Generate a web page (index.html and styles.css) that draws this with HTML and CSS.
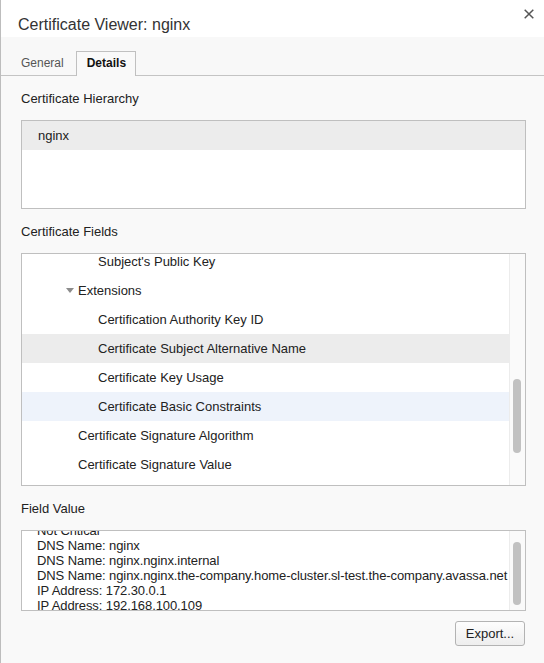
FILE: index.html
```html
<!DOCTYPE html>
<html>
<head>
<meta charset="utf-8">
<title>Certificate Viewer: nginx</title>
<link rel="stylesheet" href="styles.css">
</head>
<body>
<div class="dialog">
  <div class="titlebar">
    <span class="title">Certificate Viewer: nginx</span>
    <button class="close" aria-label="Close">
      <svg width="10" height="10" viewBox="0 0 10 10"><path d="M0.7 0.7 L9.3 9.3 M9.3 0.7 L0.7 9.3" stroke="#555" stroke-width="1.5" fill="none"/></svg>
    </button>
  </div>
  <div class="tabs">
    <div class="tab">General</div>
    <div class="tab active">Details</div>
  </div>
  <div class="content">
    <div class="label">Certificate Hierarchy</div>
    <div class="box hierarchy">
      <div class="hrow selected">nginx</div>
    </div>

    <div class="label">Certificate Fields</div>
    <div class="box fields">
      <div class="list">
        <div class="rows">
          <div class="row l3">Subject's Public Key</div>
          <div class="row l2x"><span class="tri"></span>Extensions</div>
          <div class="row l3">Certification Authority Key ID</div>
          <div class="row l3 selected">Certificate Subject Alternative Name</div>
          <div class="row l3">Certificate Key Usage</div>
          <div class="row l3 hover">Certificate Basic Constraints</div>
          <div class="row l2">Certificate Signature Algorithm</div>
          <div class="row l2">Certificate Signature Value</div>
        </div>
      </div>
      <div class="scrollbar"><div class="thumb thumb-fields"></div></div>
    </div>

    <div class="label">Field Value</div>
    <div class="box value">
      <div class="valtext">
        <div class="lines">
          <div>Not Critical</div>
          <div>DNS Name: nginx</div>
          <div>DNS Name: nginx.nginx.internal</div>
          <div>DNS Name: nginx.nginx.the-company.home-cluster.sl-test.the-company.avassa.net</div>
          <div>IP Address: 172.30.0.1</div>
          <div>IP Address: 192.168.100.109</div>
        </div>
      </div>
      <div class="scrollbar"><div class="thumb thumb-value"></div></div>
    </div>

    <div class="actions">
      <button class="btn">Export...</button>
    </div>
  </div>
</div>
</body>
</html>
```

FILE: styles.css
```css
* { box-sizing: border-box; }

html, body {
  margin: 0;
  padding: 0;
  background: #f9f9f9;
}

body {
  font-family: "Liberation Sans", Arial, sans-serif;
  color: #222;
}

.dialog {
  width: 544px;
  height: 663px;
  border-left: 1px solid #bdbdbd;
  background: #f9f9f9;
  display: flex;
  flex-direction: column;
  overflow: hidden;
}

.titlebar {
  height: 37px;
  background: #ffffff;
  display: flex;
  align-items: flex-start;
  padding: 0 10px 0 17px;
}

.title {
  margin-top: 15px;
  font-size: 16px;
  line-height: 20px;
  color: #333;
}

.close {
  margin: 9px 0 0 auto;
  padding: 0;
  border: 0;
  background: transparent;
  width: 10px;
  height: 10px;
  display: flex;
}

.tabs {
  height: 39px;
  border-bottom: 1px solid #c4c4c4;
  display: flex;
  align-items: flex-end;
  padding-left: 20px;
  background: #f8f8f8;
}

.tab {
  font-size: 12px;
  height: 24px;
  line-height: 24px;
  color: #555;
}

.tab.active {
  margin-left: 12px;
  margin-bottom: -1px;
  height: 25px;
  line-height: 23px;
  padding: 0 9px 0 10px;
  border: 1px solid #c0c0c0;
  border-bottom: 0;
  background: #f9f9f9;
  color: #111;
  font-weight: bold;
}

.content {
  padding: 0 18px 0 20px;
  display: flex;
  flex-direction: column;
}

.label {
  height: 44px;
  display: flex;
  align-items: center;
  font-size: 13px;
  color: #222;
}

.box {
  width: 505px;
  border: 1px solid #bfbfbf;
  background: #ffffff;
}

.hierarchy {
  height: 89px;
}

.hrow {
  height: 29px;
  line-height: 29px;
  padding-left: 16px;
  font-size: 13px;
}

.hrow.selected {
  background: #ececec;
}

.fields {
  height: 233px;
  display: flex;
}

.list {
  flex: 1;
  overflow: hidden;
}

.rows {
  margin-top: -7px;
}

.row {
  height: 29px;
  line-height: 29px;
  font-size: 13px;
  white-space: nowrap;
  display: flex;
  align-items: center;
}

.row.l3 { padding-left: 76px; }
.row.l2 { padding-left: 56px; }
.row.l2x { padding-left: 44px; }

.row.selected { background: #ececec; }
.row.hover { background: #eef3fb; }

.tri {
  width: 0;
  height: 0;
  border-left: 4px solid transparent;
  border-right: 4px solid transparent;
  border-top: 5px solid #8c8c8c;
  margin-right: 4px;
}

.scrollbar {
  width: 16px;
  flex: none;
  border-left: 1px solid #ececec;
  background: #fafafa;
  padding-left: 3px;
}

.thumb {
  width: 8px;
  border-radius: 4px;
  background: #c1c1c1;
}

.thumb-fields {
  margin-top: 125px;
  height: 74px;
}

.value {
  height: 81px;
  display: flex;
}

.valtext {
  flex: 1;
  min-width: 0;
  overflow: hidden;
  padding-left: 15px;
}

.lines {
  margin-top: -8px;
  font-size: 13px;
  letter-spacing: -0.09px;
  line-height: 15px;
  white-space: nowrap;
}

.thumb-value {
  margin-top: 11px;
  height: 63px;
}

.actions {
  display: flex;
  justify-content: flex-end;
  margin-top: 10px;
  width: 505px;
}

.btn {
  margin-right: 1px;
  width: 70px;
  height: 25px;
  padding: 0;
  border: 1px solid #b3b3b3;
  border-radius: 3px;
  background: linear-gradient(#fdfdfd, #eeeeee);
  font-family: "Liberation Sans", Arial, sans-serif;
  font-size: 13px;
  color: #222;
}
```
